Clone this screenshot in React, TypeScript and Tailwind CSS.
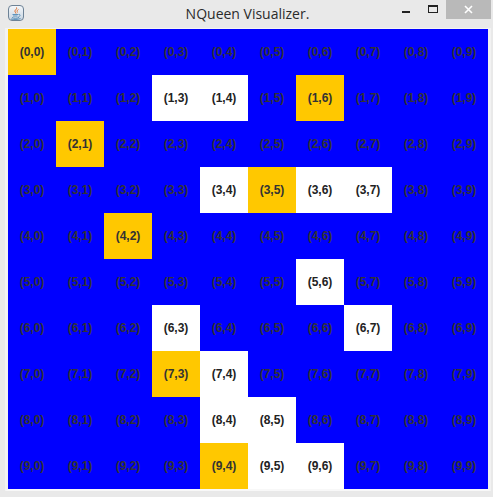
const gold = ["0,0", "1,6", "2,1", "3,5", "4,2", "7,3", "9,4"]
const white = ["1,3", "1,4", "3,4", "3,6", "3,7", "5,6", "6,3", "6,7", "7,4", "8,4", "8,5", "9,5", "9,6"]

const rows = Array.from({ length: 10 }, (_, i) => i)
const cols = Array.from({ length: 10 }, (_, i) => i)

const Cell = ({ row, col }: { row: number; col: number }) => {
    const key = `${row},${col}`

    if (gold.includes(key)) {
        return <div className="flex items-center justify-center bg-[#ffc800] text-[#333333]">({key})</div>
    }
    if (white.includes(key)) {
        return <div className="flex items-center justify-center bg-white text-[#222222]">({key})</div>
    }
    return <div className="flex items-center justify-center bg-[#0000ff] text-[#333333]">({key})</div>
}

const JavaIcon = () => (
    <div className="flex h-4 w-4 items-center justify-center rounded-sm border border-[#6d8296] bg-gradient-to-b from-[#f4f7fa] to-[#c9d6e2]">
        <svg width="12" height="13" viewBox="0 0 12 13" fill="none">
            <path d="M6.5 0.5C7.5 2 4.5 3 5 4.5C5.3 5.4 6 5.8 6 6.5" stroke="#e0651b" strokeWidth="1" />
            <path d="M8.5 2.5C7 3.2 6.8 4.2 7.5 5.5" stroke="#e0651b" strokeWidth="0.8" />
            <path d="M2.5 7.5H8M3 9H7.5M2 10.5C4 11.5 7 11.5 9 10.5M1 12C4 12.7 8 12.7 10.5 11.5" stroke="#3d7fb0" strokeWidth="0.8" />
            <path d="M8.5 7.5C10.5 7 10.8 9 8.5 9.8" stroke="#3d7fb0" strokeWidth="0.8" />
        </svg>
    </div>
)

const App = () => {
    return (
        <div className="flex h-[497px] w-[493px] flex-col overflow-hidden bg-[#e9e9e9] font-['Liberation_Sans',Arial,sans-serif]">
            <div className="relative flex h-[28px] shrink-0 items-start justify-between">
                <div className="ml-[8px] mt-[5px]">
                    <JavaIcon />
                </div>
                <div className="absolute inset-x-0 top-[5px] pl-[2px] text-center font-['Open_Sans',sans-serif] text-[14px] leading-[18px] text-[#2b2b2b]">
                    NQueen Visualizer.
                </div>
                <div className="relative mr-[2px] flex items-start">
                    <div className="mr-[18px] mt-[11px] h-[2px] w-[8px] bg-[#222222]" />
                    <div className="mr-[8px] mt-[5px] h-[8px] w-[10px] border border-t-[2px] border-[#222222]" />
                    <div className="flex h-[19px] w-[45px] items-center justify-center bg-[#b9b9b9]">
                        <svg width="9" height="9" viewBox="0 0 9 9" stroke="white" strokeWidth="1.6">
                            <path d="M1 1L8 8M8 1L1 8" />
                        </svg>
                    </div>
                </div>
            </div>
            <div className="ml-[5px] w-[486px] border-t border-t-[#f4f4f4] border-l-[3px] border-r-[3px] border-b-[2px] border-l-[#f2f2f2] border-r-[#f2f2f2] border-b-[#f8f8f8]">
                <div className="grid h-[460px] w-[480px] grid-cols-[repeat(10,48px)] grid-rows-[repeat(10,46px)] bg-[#0000ff] text-[12px] font-bold">
                    {rows.map((row) =>
                        cols.map((col) => <Cell key={`${row}-${col}`} row={row} col={col} />)
                    )}
                </div>
            </div>
        </div>
    )
}

export default App
